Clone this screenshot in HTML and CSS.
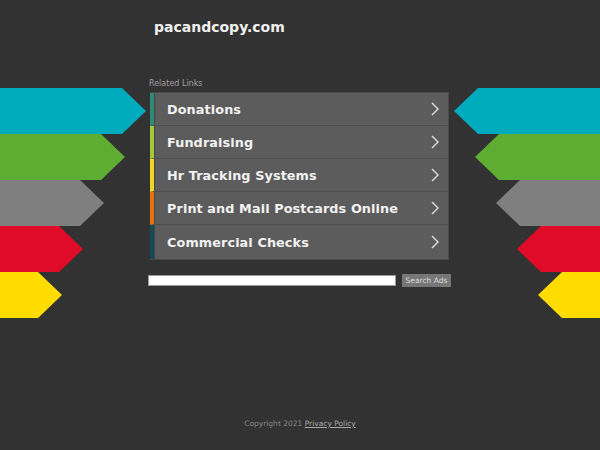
FILE: index.html
```html
<!DOCTYPE html>
<html>
<head>
<meta charset="utf-8">
<link rel="stylesheet" href="styles.css">
</head>
<body>
<div class="page">
  <header class="site">pacandcopy.com</header>
  <div class="stage">
    <div class="arrows arrows-left">
      <div class="arrow cyan w1"></div>
      <div class="arrow green w2"></div>
      <div class="arrow gray w3"></div>
      <div class="arrow red w4"></div>
      <div class="arrow yellow w5"></div>
    </div>
    <div class="center">
      <div class="label">Related Links</div>
      <div class="panel">
        <a class="row s1" href="#"><span class="txt">Donations</span><svg class="chev" width="8" height="14" viewBox="0 0 8 14"><polyline points="1,1 7,7 1,13" fill="none" stroke="#e0e0e0" stroke-width="1.4"/></svg></a>
        <a class="row s2" href="#"><span class="txt">Fundraising</span><svg class="chev" width="8" height="14" viewBox="0 0 8 14"><polyline points="1,1 7,7 1,13" fill="none" stroke="#e0e0e0" stroke-width="1.4"/></svg></a>
        <a class="row s3" href="#"><span class="txt">Hr Tracking Systems</span><svg class="chev" width="8" height="14" viewBox="0 0 8 14"><polyline points="1,1 7,7 1,13" fill="none" stroke="#e0e0e0" stroke-width="1.4"/></svg></a>
        <a class="row s4" href="#"><span class="txt">Print and Mail Postcards Online</span><svg class="chev" width="8" height="14" viewBox="0 0 8 14"><polyline points="1,1 7,7 1,13" fill="none" stroke="#e0e0e0" stroke-width="1.4"/></svg></a>
        <a class="row s5" href="#"><span class="txt">Commercial Checks</span><svg class="chev" width="8" height="14" viewBox="0 0 8 14"><polyline points="1,1 7,7 1,13" fill="none" stroke="#e0e0e0" stroke-width="1.4"/></svg></a>
      </div>
      <div class="search">
        <input class="field" type="text">
        <button class="btn">Search Ads</button>
      </div>
    </div>
    <div class="arrows arrows-right">
      <div class="arrow cyan w1"></div>
      <div class="arrow green w2"></div>
      <div class="arrow gray w3"></div>
      <div class="arrow red w4"></div>
      <div class="arrow yellow w5"></div>
    </div>
  </div>
  <footer class="foot">Copyright 2021 <a href="#">Privacy Policy</a></footer>
</div>
</body>
</html>
```
FILE: styles.css
```css
html, body {
  margin: 0;
  padding: 0;
  background: #323232;
}
body {
  font-family: "DejaVu Sans", sans-serif;
  width: 600px;
  height: 450px;
  overflow: hidden;
}
.page {
  width: 600px;
  height: 450px;
  display: flex;
  flex-direction: column;
}
.site {
  padding: 19px 0 0 154px;
  font-size: 14px;
  line-height: 16px;
  font-weight: bold;
  color: #f0f0f0;
}
.stage {
  margin-top: 41px;
  display: flex;
  align-items: flex-start;
}
.arrows {
  width: 148px;
  padding-top: 12px;
  display: flex;
  flex-direction: column;
}
.arrows-right {
  align-items: flex-end;
}
.arrow {
  height: 46px;
}
.arrows-left .arrow {
  clip-path: polygon(0 0, calc(100% - 24px) 0, 100% 50%, calc(100% - 24px) 100%, 0 100%);
}
.arrows-right .arrow {
  clip-path: polygon(24px 0, 100% 0, 100% 100%, 24px 100%, 0 50%);
}
.w1 { width: 146px; }
.w2 { width: 125px; }
.w3 { width: 104px; }
.w4 { width: 83px; }
.w5 { width: 62px; }
.cyan { background: #00abbe; }
.green { background: #5dad32; }
.gray { background: #7f7f7f; }
.red { background: #e00b28; }
.yellow { background: #ffdc00; }

.center {
  width: 304px;
  display: flex;
  flex-direction: column;
}
.label {
  font-size: 8px;
  line-height: 10px;
  padding-top: 3px;
  color: #a0a0a0;
  padding-left: 1px;
}
.panel {
  margin: 3px 3px 0 2px;
  border-top: 1px solid #4a4a4a;
  border-bottom: 1px solid #4a4a4a;
  border-right: 1px solid #4a4a4a;
  display: flex;
  flex-direction: column;
}
.row {
  height: 32px;
  border-bottom: 1px solid #4d4d4d;
  border-left: 4px solid #2e8b77;
  background: #5c5c5c;
  display: flex;
  align-items: center;
  padding: 0 9px 0 13px;
  text-decoration: none;
  box-shadow: inset 1px 0 0 #454545;
}
.row:last-child {
  border-bottom: none;
  height: 34px;
}
.s1 { border-left-color: #2d8b76; }
.s2 { border-left-color: #a7c73a; }
.s3 { border-left-color: #f2d624; }
.s4 { border-left-color: #e5720e; }
.s5 { border-left-color: #134a58; }
.txt {
  flex: 1;
  font-size: 12.8px;
  font-weight: bold;
  color: #f2f2f2;
  letter-spacing: 0.1px;
}
.chev {
  display: block;
}
.search {
  margin-top: 14px;
  display: flex;
  align-items: center;
}
.field {
  width: 248px;
  height: 11px;
  box-sizing: border-box;
  margin: 0;
  padding: 0;
  border: 1px solid #999;
  background: #fff;
}
.btn {
  margin: 0 0 0 6px;
  width: 49px;
  height: 13px;
  padding: 0;
  border: none;
  background: #777;
  color: #ddd;
  font-family: "DejaVu Sans", sans-serif;
  font-size: 7.5px;
  line-height: 13px;
}
.foot {
  margin-top: auto;
  margin-bottom: 21px;
  text-align: center;
  font-size: 7.5px;
  line-height: 10px;
  color: #8a8a8a;
}
.foot a {
  color: #a8a8a8;
}
```
